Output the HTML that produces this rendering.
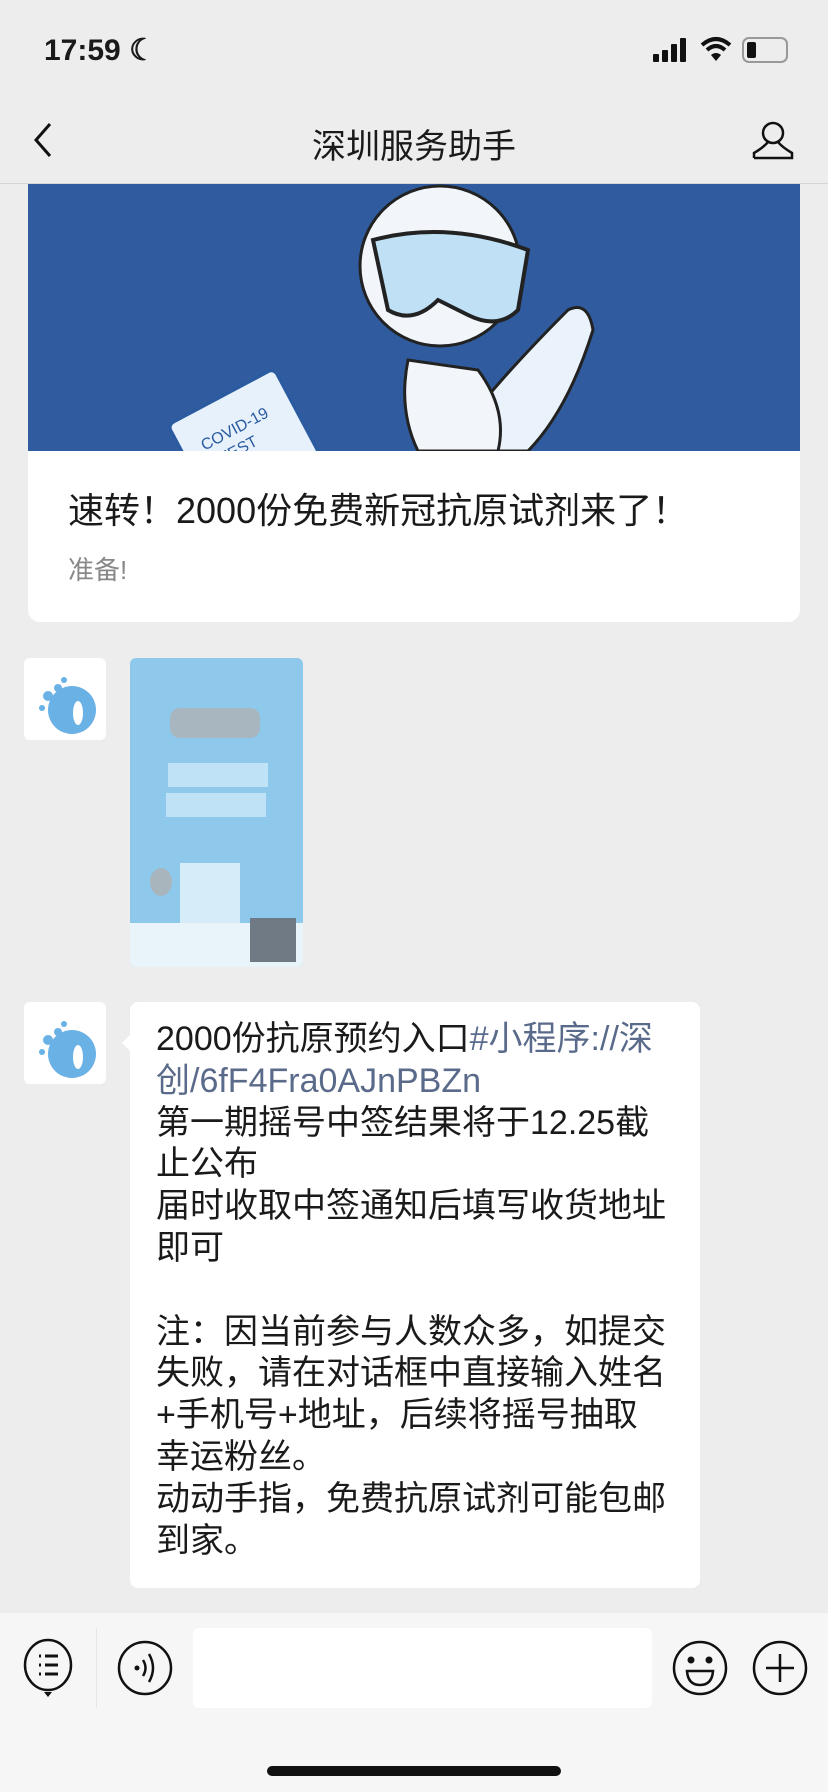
<!DOCTYPE html>
<html><head><meta charset="utf-8"><style>
*{margin:0;padding:0;box-sizing:border-box}
body{width:828px;height:1792px;background:#ededed;position:relative;overflow:hidden;font-family:"Liberation Sans","Noto Sans CJK SC",sans-serif;color:#1a1a1a}
.abs{position:absolute}
</style></head><body>
<!-- banner card -->
<div class="abs" style="left:28px;top:150px;width:772px;height:472px;background:#fff;border-radius:12px;overflow:hidden">
  <div class="abs" style="left:0;top:0;width:772px;height:301px;background:#305c9f">
    <svg width="772" height="301" style="position:absolute;left:0;top:0">
      <g transform="translate(140,275) rotate(-28)">
        <rect x="0" y="0" width="120" height="240" rx="6" fill="#e6f1fb" stroke="#2a5aa0" stroke-width="3"/>
        <text x="20" y="40" font-size="16" fill="#2a5aa0" font-family="Liberation Sans">COVID-19</text>
        <text x="30" y="60" font-size="16" fill="#2a5aa0" font-family="Liberation Sans">TEST</text>
        <rect x="35" y="75" width="55" height="130" rx="25" fill="none" stroke="#2a5aa0" stroke-width="4"/>
      </g>
      <circle cx="412" cy="116" r="80" fill="#f2f6fb" stroke="#222" stroke-width="3"/>
      <path d="M345 90 Q420 70 500 100 L490 160 Q470 180 440 165 L410 150 Q385 175 360 160 Z" fill="#bfe0f5" stroke="#222" stroke-width="4"/>
      <path d="M440 270 Q480 220 540 160 Q560 150 565 180 Q540 260 500 301 L440 301Z" fill="#eaf3fb" stroke="#222" stroke-width="3"/>
      <path d="M380 210 Q370 260 390 301 L470 301 Q480 260 450 220Z" fill="#f2f6fb" stroke="#222" stroke-width="3"/>
    </svg>
  </div>
  <div class="abs" style="left:40px;top:332px;font-size:36px;white-space:nowrap">速转！2000份免费新冠抗原试剂来了！</div>
  <div class="abs" style="left:40px;top:400px;font-size:26px;color:#888">准备!</div>
</div>
<!-- status bar -->
<div class="abs" style="left:0;top:0;width:828px;height:184px;background:#ededed;border-bottom:1px solid #d5d5d5"></div>
<div class="abs" style="left:44px;top:33px;font-size:30px;font-weight:bold">17:59 ☾</div>
<div class="abs" style="left:653px;top:38px;width:38px;height:24px">
  <div class="abs" style="left:0;top:16px;width:6px;height:8px;background:#111;border-radius:1px"></div>
  <div class="abs" style="left:9px;top:12px;width:6px;height:12px;background:#111;border-radius:1px"></div>
  <div class="abs" style="left:18px;top:6px;width:6px;height:18px;background:#111;border-radius:1px"></div>
  <div class="abs" style="left:27px;top:0;width:6px;height:24px;background:#111;border-radius:1px"></div>
</div>
<svg class="abs" style="left:700px;top:36px" width="32" height="26" viewBox="0 0 32 26"><path d="M2 9 Q16 -3 30 9" stroke="#111" stroke-width="4" fill="none"/><path d="M7 14 Q16 6 25 14" stroke="#111" stroke-width="4" fill="none"/><path d="M11 19 L16 25 L21 19 Q16 15 11 19Z" fill="#111"/></svg>
<div class="abs" style="left:742px;top:37px;width:46px;height:26px;border:2px solid #999;border-radius:7px"><div style="margin:3px;width:9px;height:16px;background:#111;border-radius:2px"></div></div>
<!-- nav -->
<svg class="abs" style="left:32px;top:122px" width="22" height="36"><path d="M18 2 L4 18 L18 34" stroke="#111" stroke-width="3" fill="none"/></svg>
<div class="abs" style="left:0;top:119px;width:828px;text-align:center;font-size:34px">深圳服务助手</div>
<svg class="abs" style="left:752px;top:120px" width="42" height="40"><circle cx="21" cy="13" r="10" stroke="#111" stroke-width="2.5" fill="none"/><path d="M2 38 L40 38 L40 33 Q30 27 26 22 M2 38 L2 33 Q12 27 16 22" stroke="#111" stroke-width="2.5" fill="none"/></svg>
<!-- avatars -->
<div class="abs" style="left:24px;top:658px;width:82px;height:82px;background:#fff;border-radius:6px"><svg width="82" height="82"><circle cx="48" cy="52" r="24" fill="#6ab1e6"/><circle cx="24" cy="38" r="5" fill="#6ab1e6"/><circle cx="34" cy="30" r="4" fill="#6ab1e6"/><circle cx="40" cy="22" r="3" fill="#6ab1e6"/><circle cx="18" cy="50" r="3" fill="#6ab1e6"/><ellipse cx="54" cy="55" rx="5" ry="12" fill="#fff"/></svg></div>
<div class="abs" style="left:24px;top:1002px;width:82px;height:82px;background:#fff;border-radius:6px"><svg width="82" height="82"><circle cx="48" cy="52" r="24" fill="#6ab1e6"/><circle cx="24" cy="38" r="5" fill="#6ab1e6"/><circle cx="34" cy="30" r="4" fill="#6ab1e6"/><circle cx="40" cy="22" r="3" fill="#6ab1e6"/><circle cx="18" cy="50" r="3" fill="#6ab1e6"/><ellipse cx="54" cy="55" rx="5" ry="12" fill="#fff"/></svg></div>
<!-- image message -->
<div class="abs" style="left:130px;top:658px;width:173px;height:309px;background:#8ec9ec;border-radius:6px;overflow:hidden">
  <div class="abs" style="left:40px;top:50px;width:90px;height:30px;background:#a8b6c0;border-radius:10px"></div>
  <div class="abs" style="left:38px;top:105px;width:100px;height:24px;background:#bfe2f6"></div>
  <div class="abs" style="left:36px;top:135px;width:100px;height:24px;background:#bfe2f6"></div>
  <div class="abs" style="left:50px;top:205px;width:60px;height:70px;background:#d6ecf8"></div>
  <div class="abs" style="left:20px;top:210px;width:22px;height:28px;background:#a9b5bd;border-radius:50%"></div>
  <div class="abs" style="left:0;top:265px;width:173px;height:44px;background:#e8f3fa"></div>
  <div class="abs" style="left:120px;top:260px;width:46px;height:44px;background:#707a84"></div>
</div>
<!-- text bubble -->
<div class="abs" style="left:130px;top:1002px;width:570px;height:586px;background:#fff;border-radius:8px"></div>
<div class="abs" style="left:122px;top:1034px;width:0;height:0;border-top:9px solid transparent;border-bottom:9px solid transparent;border-right:9px solid #fff"></div>
<div class="abs" style="left:156px;top:1019px;font-size:34px;line-height:41.8px;color:#1a1a1a;white-space:nowrap">2000份抗原预约入口<span style="color:#5a6a8a">#小程序://深</span><br><span style="color:#5a6a8a">创/6fF4Fra0AJnPBZn</span><br>第一期摇号中签结果将于12.25截<br>止公布<br>届时收取中签通知后填写收货地址<br>即可<br><br>注：因当前参与人数众多，如提交<br>失败，请在对话框中直接输入姓名<br>+手机号+地址，后续将摇号抽取<br>幸运粉丝。<br>动动手指，免费抗原试剂可能包邮<br>到家。</div>
<!-- bottom bar -->
<div class="abs" style="left:0;top:1613px;width:828px;height:179px;background:#f6f6f6"></div>
<div class="abs" style="left:96px;top:1628px;width:1px;height:80px;background:#e6e6e6"></div>
<div class="abs" style="left:193px;top:1628px;width:459px;height:80px;background:#fff;border-radius:6px"></div>
<svg class="abs" style="left:20px;top:1638px" width="56" height="60"><ellipse cx="28" cy="27" rx="23" ry="25" stroke="#111" stroke-width="2.5" fill="none"/><path d="M19 18h2M25 18h13M19 27h2M25 27h13M19 36h2M25 36h13" stroke="#111" stroke-width="3"/><path d="M24 54h8l-4 5z" fill="#111"/></svg>
<svg class="abs" style="left:117px;top:1640px" width="56" height="56"><ellipse cx="28" cy="28" rx="26" ry="26" stroke="#111" stroke-width="2.5" fill="none"/><circle cx="20" cy="28" r="2.5" fill="#111"/><path d="M26 20 Q31 28 26 36M32 14 Q40 28 32 42" stroke="#111" stroke-width="2.5" fill="none"/></svg>
<svg class="abs" style="left:672px;top:1640px" width="56" height="56"><ellipse cx="28" cy="28" rx="26" ry="26" stroke="#111" stroke-width="2.5" fill="none"/><circle cx="19" cy="20" r="3.5" fill="#111"/><circle cx="37" cy="20" r="3.5" fill="#111"/><path d="M15 31 H41 Q40 45 28 45 Q16 45 15 31Z" stroke="#111" stroke-width="2.5" fill="none"/></svg>
<svg class="abs" style="left:752px;top:1640px" width="56" height="56"><ellipse cx="28" cy="28" rx="26" ry="26" stroke="#111" stroke-width="2.5" fill="none"/><path d="M28 14V42M14 28H42" stroke="#111" stroke-width="2.5"/></svg>
<div class="abs" style="left:267px;top:1766px;width:294px;height:10px;background:#111;border-radius:5px"></div>
</body></html>
